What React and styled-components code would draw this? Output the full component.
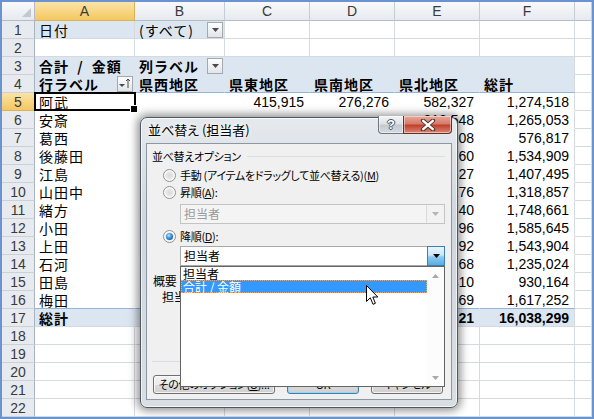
import React from "react";
import styled, { createGlobalStyle, css } from "styled-components";

const JP = `"Noto Sans CJK JP", "Noto Sans CJK SC", sans-serif`;
const NUM = `"Liberation Sans", Arial, sans-serif`;
const GRID = "#d5dae1";
const PIVOT_FILL = "#dce6f1";
const PIVOT_LINE = "#95b3d7";

const GlobalStyle = createGlobalStyle`
  html, body { margin: 0; padding: 0; background: #fff; }
  body { font-family: ${JP}; }
  * { box-sizing: border-box; }
`;

const Frame = styled.div`
  position: relative;
  width: 594px;
  height: 419px;
  border: 2px solid #6a93cf;
  overflow: hidden;
  background: #fff;
`;

const Sheet = styled.div`
  display: grid;
  grid-template-columns: 33px 100px 90px 85px 85px 85px 95px 1fr;
  grid-template-rows: 19px repeat(22, 18px);
`;

const Corner = styled.div`
  display: flex;
  align-items: flex-end;
  justify-content: flex-end;
  padding: 0 3px 3px 0;
  background: linear-gradient(#f8f9fb, #e6eaef);
  border-right: 1px solid #b5bcc6;
  border-bottom: 1px solid #b5bcc6;
`;

const CornerMark = styled.span`
  width: 0;
  height: 0;
  border-left: 9px solid transparent;
  border-bottom: 9px solid #c3c8cf;
`;

const headBg = (active, plain) =>
  active ? "linear-gradient(#fbe3a6, #f4c862)" : plain;

const ColHead = styled.div`
  display: flex;
  align-items: center;
  justify-content: center;
  font-family: ${NUM};
  font-size: 14px;
  color: #3a3a3a;
  background: ${(p) => headBg(p.$active, "linear-gradient(#f8f9fb, #e6eaef)")};
  border-right: 1px solid ${(p) => (p.$active ? "#d9b25a" : "#c6ccd4")};
  border-bottom: 1px solid ${(p) => (p.$active ? "#d9b25a" : "#b5bcc6")};
`;

const RowHead = styled.div`
  display: flex;
  align-items: center;
  justify-content: center;
  font-family: ${NUM};
  font-size: 14px;
  color: #3a3a3a;
  background: ${(p) => headBg(p.$active, "#e7ebf0")};
  border-right: 1px solid ${(p) => (p.$active ? "#d9b25a" : "#a9b3bf")};
  border-bottom: 1px solid ${(p) => (p.$active ? "#d9b25a" : "#cbd1d8")};
`;

const Cell = styled.div`
  position: relative;
  z-index: ${(p) => (p.$selected ? 2 : "auto")};
  display: flex;
  align-items: center;
  justify-content: ${(p) => (p.$num ? "flex-end" : "space-between")};
  padding: ${(p) => (p.$num ? "0 5px 0 0" : "0 1px 0 4px")};
  font-family: ${(p) => (p.$num ? NUM : JP)};
  font-size: 14px;
  font-weight: ${(p) => (p.$bold ? 700 : 400)};
  letter-spacing: ${(p) => (p.$num ? "0" : "1px")};
  word-spacing: ${(p) => (p.$num ? "0" : "4px")};
  line-height: 18px;
  color: #000;
  white-space: nowrap;
  background: ${(p) => (p.$fill ? PIVOT_FILL : "#fff")};
  border-right: 1px solid ${(p) => p.$right};
  border-bottom: 1px solid ${(p) => p.$bottom};
`;

const Selection = styled.span`
  position: absolute;
  left: -1px;
  top: -1px;
  right: -2px;
  bottom: -1px;
  border: 2px solid #000;
  pointer-events: none;

  &::after {
    content: "";
    position: absolute;
    right: -4px;
    bottom: -4px;
    width: 6px;
    height: 6px;
    background: #000;
    border: 1px solid #fff;
  }
`;

const CellButton = styled.span`
  flex: none;
  width: 16px;
  height: 16px;
  display: flex;
  align-items: center;
  justify-content: center;
  border: 1px solid #a3a9b1;
  background: linear-gradient(#fdfdfd, #e2e5e9);
`;

/* ---------- dialog ---------- */

const Dialog = styled.div`
  position: absolute;
  left: 138px;
  top: 115px;
  width: 318px;
  height: 291px;
  display: flex;
  flex-direction: column;
  padding: 0 5px 7px 5px;
  border: 1px solid #4f575f;
  border-radius: 7px;
  background: linear-gradient(180deg, #e6eaee 0%, #cfd6dd 35%, #d9dee4 100%);
  box-shadow: inset 0 0 0 1px rgba(255, 255, 255, 0.65), 0 0 9px 3px rgba(0, 0, 0, 0.42);
  font-family: ${JP};
  font-feature-settings: "palt";
`;

const TitleBar = styled.div`
  height: 26px;
  display: flex;
  justify-content: space-between;
  align-items: flex-start;
`;

const Title = styled.div`
  padding: 4px 0 0 2px;
  font-size: 13px;
  line-height: 16px;
  color: #000;
  text-shadow: 0 0 6px #fff, 0 0 3px #fff;
`;

const CaptionButtons = styled.div`
  display: flex;
  margin-top: -2px;
`;

const CaptionButton = styled.div`
  width: ${(p) => p.$w}px;
  height: 18px;
  display: flex;
  align-items: center;
  justify-content: center;
  border: 1px solid ${(p) => (p.$close ? "#6b2d24" : "#6f7780")};
  border-top: none;
  border-radius: ${(p) => (p.$close ? "0 0 4px 0" : "0 0 0 4px")};
  margin-left: ${(p) => (p.$close ? "-1px" : "0")};
  background: ${(p) =>
    p.$close
      ? "linear-gradient(#e9a899 0%, #d77b69 45%, #c0402e 55%, #d98a74 100%)"
      : "linear-gradient(#f3f5f7 0%, #dde2e7 45%, #c3cad2 55%, #d5dbe1 100%)"};
  box-shadow: inset 0 0 0 1px rgba(255, 255, 255, 0.45);
  font-family: ${NUM};
  font-weight: 700;
  font-size: 13px;
  color: #fff;
  text-shadow: 1px 0 #4b535c, -1px 0 #4b535c, 0 1px #4b535c, 0 -1px #4b535c;
`;

const Client = styled.div`
  position: relative;
  flex: 1;
  display: flex;
  flex-direction: column;
  padding: 5px 6px 5px 5px;
  background: #f0f0f0;
  border: 1px solid #8c97a3;
  font-size: 11px;
  letter-spacing: -0.3px;
  color: #000;
`;

const GroupHeader = styled.div`
  height: 14px;
  display: flex;
  align-items: center;
  gap: 6px;
  line-height: 14px;
`;

const Rule = styled.span`
  flex: 1;
  height: 1px;
  background: #d5dfe5;
`;

const RadioRow = styled.div`
  height: 16px;
  margin: ${(p) => p.$mt}px 0 0 11px;
  display: flex;
  align-items: center;
  gap: 4px;
  line-height: 16px;
`;

const Radio = styled.span`
  position: relative;
  flex: none;
  width: 13px;
  height: 13px;
  border-radius: 50%;
  border: 1px solid #8e8f8f;
  background: radial-gradient(circle at 50% 50%, #d9d9d9 0, #e8e8e8 45%, #f7f7f7 80%);
  box-shadow: inset 0 0 0 1px #fff;

  ${(p) =>
    p.$checked &&
    css`
      &::after {
        content: "";
        position: absolute;
        left: 2px;
        top: 2px;
        width: 7px;
        height: 7px;
        border-radius: 50%;
        background: radial-gradient(circle at 40% 35%, #bfe3fb 0, #3590e0 45%, #0c3f79 100%);
      }
    `}
`;

const Key = styled.span`
  text-decoration: underline;
  text-underline-offset: 1px;
`;

const Combo = styled.div`
  height: 20px;
  margin: ${(p) => p.$mt}px 0 0 28px;
  display: flex;
  border: 1px solid ${(p) => (p.$disabled ? "#c4c4c4" : "#a9a9a9")};
  background: ${(p) => (p.$disabled ? "#f4f4f4" : "#fff")};
  font-size: 12px;
  letter-spacing: 0;
`;

const ComboText = styled.span`
  flex: 1;
  padding-left: 3px;
  line-height: 18px;
  color: ${(p) => (p.$disabled ? "#9a9a9a" : "#000")};
`;

const ComboArrow = styled.span`
  width: 18px;
  display: flex;
  align-items: center;
  justify-content: center;
  ${(p) =>
    p.$hot
      ? css`
          margin: -1px -1px -1px 0;
          border: 1px solid #3c7fb1;
          background: linear-gradient(#e8f5fc 0%, #c9e7f8 45%, #8ccaf0 55%, #58ade2 100%);
        `
      : css`
          border-left: 1px solid #dadada;
          background: #f2f2f2;
        `}
`;

const Label = styled.div`
  height: 14px;
  margin: ${(p) => p.$mt}px 0 0 ${(p) => p.$ml}px;
  line-height: 14px;
  white-space: nowrap;
  font-size: 12px;
`;

const Separator = styled.div`
  height: 1px;
  margin-top: ${(p) => p.$mt}px;
  background: #d5dfe5;
`;

const ButtonRow = styled.div`
  margin-top: 13px;
  display: flex;
  gap: 12px;
  padding-left: 1px;
`;

const PushButton = styled.div`
  width: ${(p) => p.$w}px;
  height: 19px;
  display: flex;
  align-items: center;
  justify-content: center;
  border: 1px solid ${(p) => (p.$focus ? "#3c7fb1" : "#707070")};
  border-radius: 3px;
  background: linear-gradient(#f2f2f2 0%, #ebebeb 50%, #dddddd 50%, #cfcfcf 100%);
  box-shadow: inset 0 0 0 1px ${(p) => (p.$focus ? "#98d5f6" : "rgba(255,255,255,.75)")};
  white-space: nowrap;
  line-height: 17px;
`;

const ListPopup = styled.div`
  position: absolute;
  left: 33px;
  top: 122px;
  width: 265px;
  height: 121px;
  display: flex;
  border: 1px solid #646464;
  background: #fff;
  font-size: 12px;
  letter-spacing: 0;
  font-feature-settings: normal;
`;

const ListItems = styled.div`
  flex: 1;
  display: flex;
  flex-direction: column;
`;

const ListItem = styled.div`
  height: 13px;
  padding-left: 2px;
  line-height: 13px;
  white-space: nowrap;

  ${(p) =>
    p.$selected &&
    css`
      background: #3399ff;
      color: #fff;
      outline: 1px dotted #f4a460;
      outline-offset: -1px;
    `}
`;

const ListScroll = styled.div`
  width: 17px;
  display: flex;
  flex-direction: column;
  justify-content: space-between;
  align-items: center;
  padding: 7px 0 6px;
  background: #fcfcfc;
`;

const Pointer = styled.svg`
  position: absolute;
  left: 364px;
  top: 283px;
`;

/* ---------- data ---------- */

const body = [
  ["阿武", "", "415,915", "276,276", "582,327", "1,274,518"],
  ["安斎", "", "", "", "312,548", "1,265,053"],
  ["葛西", "", "", "", "145,208", "576,817"],
  ["後藤田", "", "", "", "398,760", "1,534,909"],
  ["江島", "", "", "", "356,627", "1,407,495"],
  ["山田中", "", "", "", "301,276", "1,318,857"],
  ["緒方", "", "", "", "452,740", "1,748,661"],
  ["小田", "", "", "", "407,596", "1,585,645"],
  ["上田", "", "", "", "389,792", "1,543,904"],
  ["石河", "", "", "", "298,168", "1,235,024"],
  ["田島", "", "", "", "233,410", "930,164"],
  ["梅田", "", "", "", "412,469", "1,617,252"],
];

const blank = () => Array.from({ length: 6 }, () => ({}));

const buildRows = () => {
  const rows = [];
  rows.push([
    { text: "日付", fill: true },
    { text: "(すべて)", fill: true, btn: "filter" },
    {}, {}, {}, {},
  ]);
  rows.push(blank());
  rows.push([
    { text: "合計 / 金額", bold: true, fill: true, pivot: true },
    { text: "列ラベル", bold: true, fill: true, pivot: true, btn: "filter" },
    ...[0, 1, 2, 3].map(() => ({ fill: true, pivot: true })),
  ]);
  rows.push(
    ["行ラベル", "県西地区", "県東地区", "県南地区", "県北地区", "総計"].map((t, i) => ({
      text: t,
      bold: true,
      fill: true,
      pivot: true,
      line: true,
      btn: i === 0 ? "sort" : null,
    }))
  );
  body.forEach((r, ri) => {
    rows.push(
      r.map((t, i) => ({
        text: t,
        num: i > 0,
        pivot: true,
        line: ri === body.length - 1,
        selected: ri === 0 && i === 0,
      }))
    );
  });
  rows.push(
    ["総計", "", "", "", "4,291,021", "16,038,299"].map((t, i) => ({
      text: t,
      num: i > 0,
      bold: true,
      fill: true,
      pivot: true,
    }))
  );
  while (rows.length < 22) rows.push(blank());
  return rows;
};

const Triangle = ({ color = "#4a4a4a" }) => (
  <svg width="7" height="4" viewBox="0 0 7 4">
    <polygon points="0,0 7,0 3.5,4" fill={color} />
  </svg>
);

const SortGlyph = () => (
  <svg width="12" height="11" viewBox="0 0 12 11">
    <polygon points="0,6 6,6 3,9" fill="#4a4a4a" />
    <path d="M9 10V1M7 3l2-2 2 2" stroke="#4a4a4a" strokeWidth="1" fill="none" />
  </svg>
);

const CloseGlyph = () => (
  <svg width="16" height="12" viewBox="0 0 16 12">
    <path d="M3 1.5L13 10.5M13 1.5L3 10.5" stroke="#4a3430" strokeWidth="4.2" strokeLinecap="round" />
    <path d="M3.2 1.8L12.8 10.2M12.8 1.8L3.2 10.2" stroke="#fff" strokeWidth="2.4" strokeLinecap="round" />
  </svg>
);

const SheetView = () => {
  const rows = buildRows();
  return (
    <Sheet>
      <Corner>
        <CornerMark />
      </Corner>
      {["A", "B", "C", "D", "E", "F"].map((c) => (
        <ColHead key={c} $active={c === "A"}>
          {c}
        </ColHead>
      ))}
      <ColHead />
      {rows.map((row, ri) => (
        <React.Fragment key={ri}>
          <RowHead $active={ri === 4}>{ri + 1}</RowHead>
          {row.map((c, ci) => {
            const right = c.pivot && ci < 5 ? "transparent" : GRID;
            const bottom = c.line ? PIVOT_LINE : c.pivot && ri !== 16 ? "transparent" : GRID;
            return (
              <Cell
                key={ci}
                $num={c.num}
                $bold={c.bold}
                $fill={c.fill}
                $right={right}
                $bottom={bottom}
                $selected={c.selected}
              >
                {c.text && <span>{c.text}</span>}
                {c.btn && (
                  <CellButton>{c.btn === "sort" ? <SortGlyph /> : <Triangle />}</CellButton>
                )}
                {c.selected && <Selection />}
              </Cell>
            );
          })}
          <Cell $right={GRID} $bottom={GRID} />
        </React.Fragment>
      ))}
    </Sheet>
  );
};

const SortDialog = () => (
  <Dialog>
    <TitleBar>
      <Title>並べ替え (担当者)</Title>
      <CaptionButtons>
        <CaptionButton $w={26}>?</CaptionButton>
        <CaptionButton $w={49} $close>
          <CloseGlyph />
        </CaptionButton>
      </CaptionButtons>
    </TitleBar>
    <Client>
      <GroupHeader>
        <span>並べ替えオプション</span>
        <Rule />
      </GroupHeader>
      <RadioRow $mt={4}>
        <Radio />
        <span>
          手動 (アイテムをドラッグして並べ替える)(<Key>M</Key>)
        </span>
      </RadioRow>
      <RadioRow $mt={1}>
        <Radio />
        <span>
          昇順(<Key>A</Key>):
        </span>
      </RadioRow>
      <Combo $mt={4} $disabled>
        <ComboText $disabled>担当者</ComboText>
        <ComboArrow>
          <Triangle color="#b4b4b4" />
        </ComboArrow>
      </Combo>
      <RadioRow $mt={4}>
        <Radio $checked />
        <span>
          降順(<Key>D</Key>):
        </span>
      </RadioRow>
      <Combo $mt={2}>
        <ComboText>担当者</ComboText>
        <ComboArrow $hot>
          <Triangle color="#000" />
        </ComboArrow>
      </Combo>
      <Label $mt={8} $ml={1}>
        概要
      </Label>
      <Label $mt={2} $ml={10}>
        担当者 を 合計 / 金額 の降順で並べ替え
      </Label>
      <Separator $mt={57} />
      <ButtonRow>
        <PushButton $w={122}>
          その他のオプション(<Key>O</Key>)...
        </PushButton>
        <PushButton $w={72} $focus>
          OK
        </PushButton>
        <PushButton $w={72}>キャンセル</PushButton>
      </ButtonRow>
      <ListPopup>
        <ListItems>
          <ListItem>担当者</ListItem>
          <ListItem $selected>合計 / 金額</ListItem>
        </ListItems>
        <ListScroll>
          <svg width="7" height="4" viewBox="0 0 7 4">
            <polygon points="0,4 7,4 3.5,0" fill="#a8a8a8" />
          </svg>
          <Triangle color="#a8a8a8" />
        </ListScroll>
      </ListPopup>
    </Client>
  </Dialog>
);

export default function App() {
  return (
    <>
      <GlobalStyle />
      <Frame>
        <SheetView />
        <SortDialog />
        <Pointer width="13" height="21" viewBox="0 0 13 21">
          <path
            d="M0.5 0.5V16.5L4.3 12.8L7 19.3L9.4 18.3L6.8 12H11.8Z"
            fill="#fff"
            stroke="#000"
            strokeWidth="1"
            strokeLinejoin="round"
          />
        </Pointer>
      </Frame>
    </>
  );
}
